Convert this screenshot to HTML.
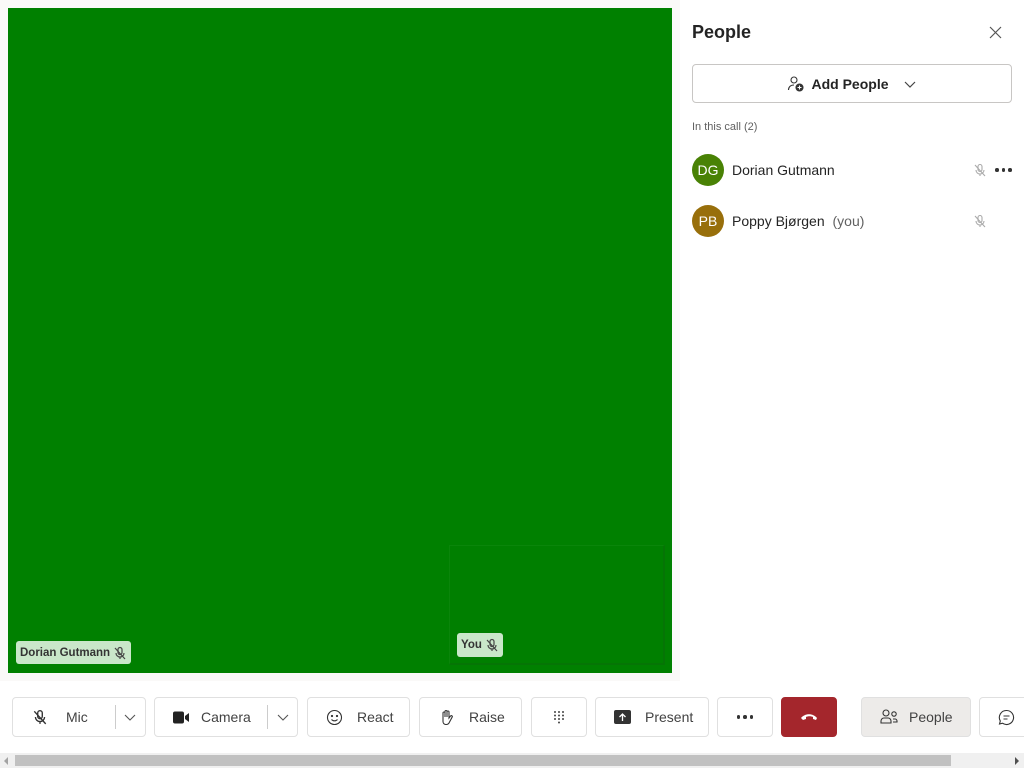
<!DOCTYPE html>
<html><head><style>
*{box-sizing:border-box;margin:0;padding:0}
body{width:1024px;height:768px;overflow:hidden;background:#fff;font-family:"Liberation Sans",sans-serif;color:#242424;position:relative}
.abs{position:absolute}
.btn{position:absolute;top:697px;height:40px;border:1px solid #e0e0e0;border-radius:4px;background:#fff;display:flex;align-items:center;font-size:14px;color:#424242}
.btn svg{flex:none}
.lbl{position:absolute;background:#c9e7c9;border-radius:3px;font-size:11.5px;font-weight:bold;color:#333;display:flex;align-items:center;padding:0 4px;gap:3px}
.dots{display:flex;gap:3px}.dots i{width:3.5px;height:3.5px;border-radius:50%;background:#333;display:block}
</style></head><body>
<div class="abs" style="left:0;top:0;width:680px;height:681px;background:#faf9f8"></div>
<div class="abs" style="left:8px;top:8px;width:664px;height:665px;background:#008000"></div>
<div class="abs" style="left:449px;top:545px;width:216px;height:120px;background:#007f00;border-right:2px solid #057505;border-bottom:2px solid #057505;border-left:1px solid #0a850a;border-top:1px solid #0a850a"></div>
<div class="lbl" style="left:16px;top:641px;height:23px">Dorian Gutmann <svg width="14" height="14" viewBox="0 0 14 14" fill="none" stroke="#444" stroke-width="1.2"><rect x="5" y="1.5" width="4" height="7" rx="2"/><path d="M3 7a4 4 0 008 0M7 11v2M2 2l10 11"/></svg></div>
<div class="lbl" style="left:457px;top:633px;height:24px">You <svg width="14" height="14" viewBox="0 0 14 14" fill="none" stroke="#444" stroke-width="1.2"><rect x="5" y="1.5" width="4" height="7" rx="2"/><path d="M3 7a4 4 0 008 0M7 11v2M2 2l10 11"/></svg></div>

<div class="abs" style="left:692px;top:22px;font-size:18px;font-weight:bold;color:#242424">People</div>
<svg class="abs" style="left:989px;top:26px" width="13" height="13" viewBox="0 0 13 13" stroke="#555" stroke-width="1.2"><path d="M1 1l11 11M12 1L1 12"/></svg>
<div class="abs" style="left:692px;top:64px;width:320px;height:39px;border:1px solid #c8c6c4;border-radius:4px;display:flex;align-items:center;justify-content:center;font-size:14px;font-weight:bold;gap:6px">
<svg width="18" height="18" viewBox="0 0 18 18" fill="none" stroke="#333" stroke-width="1.1"><circle cx="7" cy="5" r="3"/><path d="M1.5 15c0-3 2-5 5.5-5"/><circle cx="12.5" cy="12.5" r="3.5" fill="#333"/><path d="M12.5 10.5v4M10.5 12.5h4" stroke="#fff"/></svg>Add People <svg width="14" height="10" viewBox="0 0 14 10" style="margin-left:8px" fill="none" stroke="#444" stroke-width="1.2"><path d="M2 3l5 5 5-5"/></svg></div>
<div class="abs" style="left:692px;top:121px;font-size:11px;color:#616161">In this call (2)</div>
<div class="abs" style="left:692px;top:154px;width:32px;height:32px;border-radius:50%;background:#498205;color:#fff;font-size:14px;display:flex;align-items:center;justify-content:center">DG</div>
<div class="abs" style="left:732px;top:162px;font-size:14px">Dorian Gutmann</div>
<div class="abs" style="left:692px;top:205px;width:32px;height:32px;border-radius:50%;background:#986f0b;color:#fff;font-size:14px;display:flex;align-items:center;justify-content:center">PB</div>
<div class="abs" style="left:732px;top:213px;font-size:14px">Poppy Bjørgen <span style="color:#616161;margin-left:4px">(you)</span></div>
<svg class="abs" style="left:973px;top:163px" width="14" height="14" viewBox="0 0 14 14" fill="none" stroke="#aaa" stroke-width="1.1"><rect x="5" y="1.5" width="4" height="7" rx="2"/><path d="M3 7a4 4 0 008 0M7 11v2M2 2l10 11"/></svg>
<svg class="abs" style="left:973px;top:214px" width="14" height="14" viewBox="0 0 14 14" fill="none" stroke="#aaa" stroke-width="1.1"><rect x="5" y="1.5" width="4" height="7" rx="2"/><path d="M3 7a4 4 0 008 0M7 11v2M2 2l10 11"/></svg>
<div class="abs dots" style="left:995px;top:168px"><i></i><i></i><i></i></div>

<div class="btn" style="left:12px;width:134px"><svg style="margin-left:19px" width="16" height="16" viewBox="0 0 14 14" fill="none" stroke="#333" stroke-width="1.2"><rect x="5" y="1.5" width="4" height="7" rx="2"/><path d="M3 7a4 4 0 008 0M7 11v2M2 2l10 11"/></svg><span style="margin-left:18px">Mic</span><span style="position:absolute;left:102px;top:7px;width:1px;height:24px;background:#ccc"></span><svg style="position:absolute;left:110px;top:14px" width="14" height="10" viewBox="0 0 14 10" fill="none" stroke="#555" stroke-width="1.1"><path d="M2 3l5 5 5-5"/></svg></div>
<div class="btn" style="left:154px;width:144px"><svg style="margin-left:18px" width="17" height="13" viewBox="0 0 17 13" fill="#222"><rect x="0" y="0.5" width="11" height="12" rx="2"/><path d="M12 5l4-3v9l-4-3z"/></svg><span style="margin-left:11px">Camera</span><span style="position:absolute;left:112px;top:7px;width:1px;height:24px;background:#ccc"></span><svg style="position:absolute;left:121px;top:14px" width="14" height="10" viewBox="0 0 14 10" fill="none" stroke="#555" stroke-width="1.1"><path d="M2 3l5 5 5-5"/></svg></div>
<div class="btn" style="left:307px;width:103px"><svg style="margin-left:18px" width="17" height="17" viewBox="0 0 17 17" fill="none" stroke="#333" stroke-width="1.1"><circle cx="8.5" cy="8.5" r="7"/><circle cx="6" cy="7" r=".6" fill="#333"/><circle cx="11" cy="7" r=".6" fill="#333"/><path d="M5.5 10.5a4 4 0 006 0"/></svg><span style="margin-left:14px">React</span></div>
<div class="btn" style="left:419px;width:103px"><svg style="margin-left:18px" width="17" height="17" viewBox="0 0 17 17" fill="none" stroke="#333" stroke-width="1.1"><path d="M5 9V4a1 1 0 012 0v4V2.5a1 1 0 012 0V8V3a1 1 0 012 0v6l1.5-2a1 1 0 011.6 1.2L11 14a3 3 0 01-2.5 1.5H7.5A3 3 0 015 12.5z"/></svg><span style="margin-left:14px">Raise</span></div>
<div class="btn" style="left:531px;width:56px;justify-content:center"><svg width="12" height="14" viewBox="0 0 12 14" fill="#444"><circle cx="2" cy="2" r="1"/><circle cx="6" cy="2" r="1"/><circle cx="10" cy="2" r="1"/><circle cx="2" cy="5.5" r="1"/><circle cx="6" cy="5.5" r="1"/><circle cx="10" cy="5.5" r="1"/><circle cx="2" cy="9" r="1"/><circle cx="6" cy="9" r="1"/><circle cx="10" cy="9" r="1"/><circle cx="6" cy="12.5" r="1"/></svg></div>
<div class="btn" style="left:595px;width:114px"><svg style="margin-left:18px" width="17" height="14" viewBox="0 0 17 14"><rect width="17" height="14" rx="2" fill="#333"/><path d="M8.5 11V4M5.5 7l3-3 3 3" stroke="#fff" stroke-width="1.3" fill="none"/></svg><span style="margin-left:14px">Present</span></div>
<div class="btn" style="left:717px;width:56px;justify-content:center"><div class="dots"><i></i><i></i><i></i></div></div>
<div class="btn" style="left:781px;width:56px;justify-content:center;background:#a4262c;border-color:#a4262c"><svg width="18" height="8" viewBox="0 0 18 8"><path d="M1 5c4-5 12-5 16 0l-1 2-3-1V4c-2-1-5-1-7 0v2l-3 1z" fill="#fff"/></svg></div>
<div class="btn" style="left:861px;width:110px;background:#edebe9"><svg style="margin-left:18px" width="18" height="16" viewBox="0 0 18 16" fill="none" stroke="#333" stroke-width="1.1"><circle cx="6" cy="4" r="3"/><path d="M1 14v-2a3 3 0 013-3h4a3 3 0 013 3v2z"/><circle cx="14" cy="5" r="2.2"/><path d="M13 10h2a2 2 0 012 2v1h-4"/></svg><span style="margin-left:11px">People</span></div>
<div class="btn" style="left:979px;width:60px"><svg style="margin-left:18px" width="17" height="17" viewBox="0 0 17 17" fill="none" stroke="#333" stroke-width="1.1"><path d="M8.5 1.5a7 7 0 11-4 12.7L1.5 15l.8-3A7 7 0 018.5 1.5z"/><path d="M5.5 7h6M5.5 10h4"/></svg></div>

<div class="abs" style="left:0;top:753px;width:1024px;height:15px;background:#f0f0f0"></div>
<div class="abs" style="left:15px;top:755px;width:936px;height:11px;background:#c1c1c1"></div>
<div class="abs" style="left:4px;top:757px;width:0;height:0;border-top:4px solid transparent;border-bottom:4px solid transparent;border-right:4px solid #a3a3a3"></div>
<div class="abs" style="left:1015px;top:757px;width:0;height:0;border-top:4px solid transparent;border-bottom:4px solid transparent;border-left:4px solid #505050"></div>
</body></html>
